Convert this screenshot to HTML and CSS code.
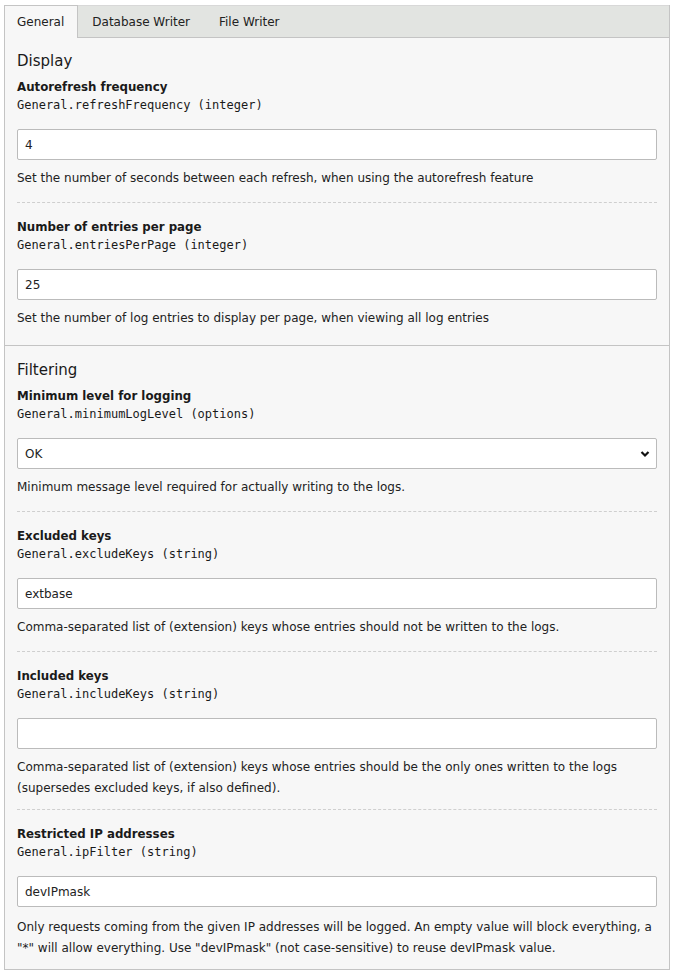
FILE: index.html
```html
<!DOCTYPE html>
<html>
<head>
<meta charset="utf-8">
<link rel="stylesheet" href="styles.css">
</head>
<body>
<div class="panel">
  <div class="tabs">
    <div class="tab active">General</div>
    <div class="tab">Database Writer</div>
    <div class="tab">File Writer</div>
  </div>
  <div class="section">
    <h2 class="section-title">Display</h2>
    <div class="field">
      <div class="label">Autorefresh frequency</div>
      <div class="key">General.refreshFrequency (integer)</div>
      <div class="input">4</div>
      <div class="desc">Set the number of seconds between each refresh, when using the autorefresh feature</div>
    </div>
    <div class="field">
      <div class="label">Number of entries per page</div>
      <div class="key">General.entriesPerPage (integer)</div>
      <div class="input">25</div>
      <div class="desc">Set the number of log entries to display per page, when viewing all log entries</div>
    </div>
  </div>
  <div class="section section-last">
    <h2 class="section-title">Filtering</h2>
    <div class="field">
      <div class="label">Minimum level for logging</div>
      <div class="key">General.minimumLogLevel (options)</div>
      <div class="input select"><span>OK</span>
        <svg class="chevron" width="10" height="8" viewBox="0 0 10 8"><path d="M1.5 2 L5 5.5 L8.5 2" fill="none" stroke="#111" stroke-width="2.2"/></svg>
      </div>
      <div class="desc">Minimum message level required for actually writing to the logs.</div>
    </div>
    <div class="field">
      <div class="label">Excluded keys</div>
      <div class="key">General.excludeKeys (string)</div>
      <div class="input">extbase</div>
      <div class="desc">Comma-separated list of (extension) keys whose entries should not be written to the logs.</div>
    </div>
    <div class="field field-tight">
      <div class="label">Included keys</div>
      <div class="key">General.includeKeys (string)</div>
      <div class="input"></div>
      <div class="desc">Comma-separated list of (extension) keys whose entries should be the only ones written to the logs (supersedes excluded keys, if also defined).</div>
    </div>
    <div class="field">
      <div class="label">Restricted IP addresses</div>
      <div class="key">General.ipFilter (string)</div>
      <div class="input">devIPmask</div>
      <div class="desc desc-low">Only requests coming from the given IP addresses will be logged. An empty value will block everything, a "*" will allow everything. Use "devIPmask" (not case-sensitive) to reuse devIPmask value.</div>
    </div>
  </div>
</div>
</body>
</html>
```

FILE: styles.css
```css
html, body {
  margin: 0;
  padding: 0;
  background: #ffffff;
}
body {
  font-family: "DejaVu Sans", Verdana, sans-serif;
  font-size: 12px;
  color: #1a1a1a;
}
.panel {
  margin: 5px 4px 0 4px;
  border: 1px solid #c4c4c4;
  border-top: 0;
  background: #f7f7f7;
}
.tabs {
  display: flex;
  height: 31px;
  background: #e2e4e1;
  border-bottom: 1px solid #c4c4c4;
  border-top: 1px solid #d8d8d8;
}
.tab {
  display: flex;
  align-items: center;
  padding: 0 14px;
  font-size: 12px;
  color: #222;
  border-right: 1px solid transparent;
}
.tab.active {
  background: #f7f7f7;
  border-right: 1px solid #c4c4c4;
  margin-bottom: -1px;
  padding: 0 13px 1px 12px;
  margin-top: -1px;
  border-top: 1px solid #c4c4c4;
}
.section {
  padding: 11px 12px 16px 12px;
}
.section + .section {
  border-top: 1px solid #c4c4c4;
  padding-top: 12px;
}
.section-last {
  padding-bottom: 10px;
}
.section-title {
  margin: 0 0 5px 0;
  font-size: 15px;
  font-weight: normal;
  line-height: 24px;
  color: #1a1a1a;
}
.field {
  padding-bottom: 13px;
  border-bottom: 1px dashed #cfcfcf;
}
.field + .field {
  padding-top: 15px;
}
.field:last-child {
  padding-bottom: 0;
  border-bottom: 0;
}
.field-tight {
  padding-bottom: 10px;
}
.label {
  font-weight: bold;
  line-height: 18px;
  font-size: 11.8px;
}
.key {
  font-family: "DejaVu Sans Mono", "Liberation Mono", monospace;
  font-size: 12px;
  line-height: 18px;
}
.input {
  margin-top: 15px;
  height: 29px;
  border: 1px solid #bbbbbb;
  border-radius: 2px;
  background: #ffffff;
  padding: 0 7px;
  display: flex;
  align-items: center;
  font-size: 12px;
  color: #222;
}
.select {
  justify-content: space-between;
  padding-right: 6px;
}
.chevron {
  display: block;
}
.desc {
  margin-top: 8px;
  line-height: 21px;
  font-size: 12px;
  color: #222;
}
.desc-low {
  margin-top: 10px;
}
```
